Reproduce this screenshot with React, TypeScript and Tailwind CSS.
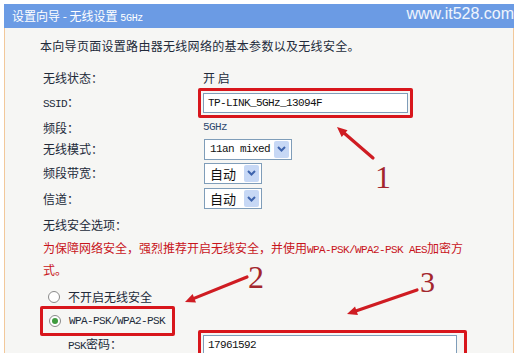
import React from "react";

const cjk = "font-['SimSun','Noto_Sans_CJK_SC',sans-serif]";
const mono = "font-['Liberation_Mono','Noto_Sans_CJK_SC',monospace]";

type ArrowProps = { x1: number; y1: number; x2: number; y2: number };

// arrow drawn from tail (x1,y1) to head (x2,y2)
function Arrow({ x1, y1, x2, y2 }: ArrowProps) {
  const angle = Math.atan2(y2 - y1, x2 - x1);
  const len = 11;
  const spread = 0.42;
  const ax = x2 - len * Math.cos(angle - spread);
  const ay = y2 - len * Math.sin(angle - spread);
  const bx = x2 - len * Math.cos(angle + spread);
  const by = y2 - len * Math.sin(angle + spread);
  const sx = x2 - 7 * Math.cos(angle);
  const sy = y2 - 7 * Math.sin(angle);

  return (
    <g>
      <line x1={x1} y1={y1} x2={sx} y2={sy} stroke="#cf1c22" strokeWidth={3.2} strokeLinecap="round" />
      <polygon points={`${x2},${y2} ${ax},${ay} ${bx},${by}`} fill="#cf1c22" />
    </g>
  );
}

function Select({ value, width }: { value: string; width: string }) {
  const isCjk = value === "自动";
  return (
    <div className={`flex h-[21px] items-center justify-between border border-[#7f9db9] bg-white pl-[5px] pr-[2px] ${width}`}>
      <span
        className={`whitespace-nowrap leading-none text-[#111] ${
          isCjk ? `${cjk} text-[13px]` : `${mono} text-[11px] tracking-[-0.6px]`
        }`}
      >
        {value}
      </span>
      <span className="flex h-[17px] w-[15px] shrink-0 items-center justify-center rounded-[2px] bg-[#c7d8f5]">
        <svg width="9" height="6" viewBox="0 0 9 6">
          <path d="M1 1 L4.5 4.5 L8 1" fill="none" stroke="#3e64ad" strokeWidth="2" />
        </svg>
      </span>
    </div>
  );
}

function Radio({ checked }: { checked?: boolean }) {
  return (
    <span className="flex h-[12px] w-[12px] items-center justify-center rounded-full border border-[#8a8a8a] bg-white">
      {checked && <span className="h-[6px] w-[6px] rounded-full bg-[#3f9b3f]" />}
    </span>
  );
}

const rows: { label: string; labelMono?: boolean; h: string; value: React.ReactNode }[] = [
  { label: "无线状态：", h: "h-[20px]", value: <span className="pl-[5px] text-[12px]">开 启</span> },
  {
    label: "SSID：",
    labelMono: true,
    h: "h-[30px]",
    value: (
      <div className="rounded-[2px] border-[3px] border-[#d8161c] p-[2px]">
        <div className="flex h-[20px] w-[205px] items-center border border-[#7f9db9] bg-white pl-[4px]">
          <span className={`${mono} text-[11px] tracking-[-0.6px] text-[#111]`}>TP-LINK_5GHz_13094F</span>
        </div>
      </div>
    ),
  },
  {
    label: "频段：",
    h: "h-[19px]",
    value: <span className={`${mono} pl-[5px] text-[11px] tracking-[-0.6px] text-[#2f4a70]`}>5GHz</span>,
  },
  { label: "无线模式：", h: "h-[24px]", value: <div className="pl-[6px]"><Select value="11an mixed" width="w-[88px]" /></div> },
  { label: "频段带宽：", h: "h-[24px]", value: <div className="pl-[6px]"><Select value="自动" width="w-[58px]" /></div> },
  { label: "信道：", h: "h-[27px]", value: <div className="pl-[6px]"><Select value="自动" width="w-[58px]" /></div> },
];

export default function App() {
  return (
    <div className={`relative h-[353px] w-[519px] overflow-hidden bg-white pl-[4px] pt-[4px] ${cjk} text-[#222a3a]`}>
      <div className="flex h-[24px] w-[510px] items-center justify-between bg-[#6b9be4] pl-[8px] pr-0">
        <span className="text-[12px] text-white">
          设置向导 - 无线设置 <span className={`${mono} text-[10px] tracking-[-0.3px]`}>5GHz</span>
        </span>
        <span className="-mt-[5px] font-['Liberation_Sans',sans-serif] text-[16px] leading-none text-white/90">
          www.it528.com
        </span>
      </div>

      <div className="h-[330px] w-[510px] border-l border-r border-[#f2c89a] bg-[#f6f6f4] pt-[9px]">
        <p className="pl-[35px] text-[12px] leading-[18px] tracking-[0.3px]">
          本向导页面设置路由器无线网络的基本参数以及无线安全。
        </p>

        <div className="mt-[13px] pl-[38px]">
          {rows.map((row) => (
            <div key={row.label} className={`flex items-center ${row.h}`}>
              <span className={`w-[155px] text-[12px] ${row.labelMono ? mono : ""}`}>
                {row.labelMono ? (
                  <>
                    <span className="text-[11px] tracking-[-0.6px]">SSID</span>
                    <span className={cjk}>：</span>
                  </>
                ) : (
                  row.label
                )}
              </span>
              {row.value}
            </div>
          ))}

          <div className="flex h-[26px] items-center text-[12px]">无线安全选项：</div>

          <p className="text-[12px] leading-[19px] text-[#c8141b]">
            为保障网络安全，强烈推荐开启无线安全，并使用
            <span className={`${mono} text-[11px] tracking-[-0.6px]`}>WPA-PSK/WPA2-PSK AES</span>
            加密方
            <br />
            式。
          </p>

          <div className="mt-[9px] flex h-[18px] items-center gap-[8px] pl-[5px] text-[12px]">
            <Radio />
            <span>不开启无线安全</span>
          </div>

          <div className="-ml-[3px] flex h-[30px] w-[135px] items-center gap-[8px] rounded-[2px] border-[3px] border-[#d8161c] pl-[6px]">
            <Radio checked />
            <span className={`${mono} text-[11px] tracking-[-0.6px]`}>WPA-PSK/WPA2-PSK</span>
          </div>

          <div className="-mt-[6px] flex h-[30px] items-center">
            <span className="w-[155px] pl-[25px] text-[12px]">
              <span className={`${mono} text-[11px] tracking-[-0.6px]`}>PSK</span>密码：
            </span>
            <div className="w-[269px] rounded-[2px] border-[3px] border-[#d8161c] p-[2px]">
              <div className="flex h-[20px] w-[254px] items-center border border-[#7f9db9] bg-white pl-[4px]">
                <span className={`${mono} text-[11px] tracking-[-0.6px] text-[#111]`}>17961592</span>
              </div>
            </div>
          </div>
        </div>
      </div>

      <svg className="pointer-events-none absolute left-0 top-0" width="519" height="353">
        <Arrow x1={373} y1={158} x2={337} y2={127} />
        <Arrow x1={247} y1={277} x2={185} y2={302} />
        <Arrow x1={417} y1={290} x2={347} y2={314} />
      </svg>

      <span className="absolute left-[375px] top-[161px] font-['Liberation_Serif',serif] text-[32px] leading-none text-[#a3262d]">
        1
      </span>
      <span className="absolute left-[248px] top-[261px] font-['Liberation_Serif',serif] text-[32px] leading-none text-[#a3262d]">
        2
      </span>
      <span className="absolute left-[420px] top-[267px] font-['Liberation_Serif',serif] text-[30px] leading-none text-[#a3262d]">
        3
      </span>
    </div>
  );
}
